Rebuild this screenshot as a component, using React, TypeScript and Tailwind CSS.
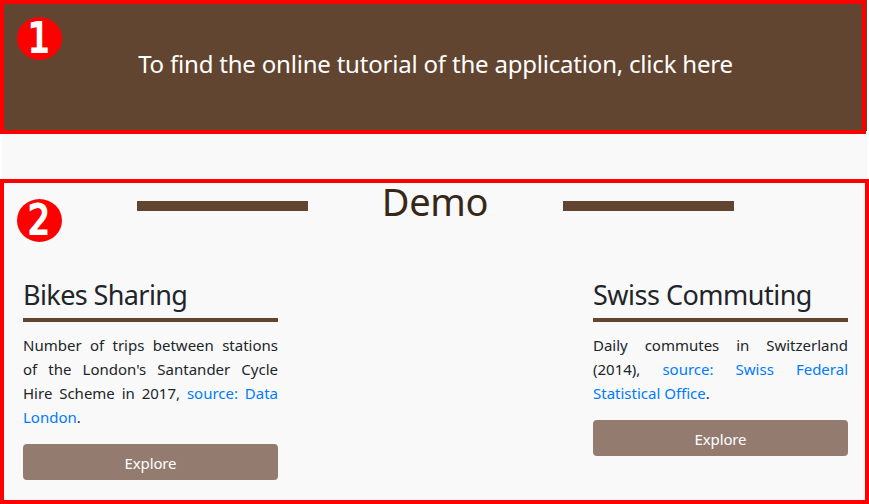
import type { ReactNode } from "react";

function Badge({ digit, className }: { digit: string; className: string }) {
  return (
    <div
      className={`absolute flex items-center justify-center rounded-[50%] bg-[#ff0000] text-white ${className}`}
    >
      <span className="inline-block scale-x-[0.84] font-['DejaVu_Sans',sans-serif] text-[41px] leading-none [-webkit-text-stroke:2.2px_white]">
        {digit}
      </span>
    </div>
  );
}

function DemoCard({ title, titleClass, children }: { title: string; titleClass: string; children: ReactNode }) {
  return (
    <article className="w-[255px]">
      <h3 className={`h-[42px] border-b-4 border-[#614530] text-[27px] leading-[29px] whitespace-nowrap ${titleClass}`}>
        {title}
      </h3>
      <div className="mt-[11px] text-justify text-[15px] leading-6">{children}</div>
      <button className="mt-[15px] block h-9 w-full rounded bg-[#937c6f] pt-px text-[15px] leading-9 tracking-[-0.15px] text-white">
        Explore
      </button>
    </article>
  );
}

export default function App() {
  return (
    <div className="relative h-[504px] w-[869px] overflow-hidden bg-white font-['Noto_Sans','Open_Sans',sans-serif] text-[#212529]">
      <div className="ml-0.5 h-full w-[865px] bg-[#f9f9f9]">
        <header className="flex h-[131px] items-center justify-center bg-[#614530] pb-[3px] pl-[2px]">
          <a className="text-[24px] tracking-[-0.2px] whitespace-nowrap text-white">
            To find the online tutorial of the application, click here
          </a>
        </header>
        <main className="pt-[46px]">
          <div className="flex h-[51px] items-center pl-[135px]">
            <span className="mt-[7px] h-[10px] w-[171px] bg-[#614530]" />
            <h2 className="-mt-[3px] w-[255px] pr-px text-center text-[38px] leading-[50px] tracking-[-0.3px] text-[#372719]">
              Demo
            </h2>
            <span className="mt-[7px] h-[10px] w-[171px] bg-[#614530]" />
          </div>
          <div className="flex justify-between pt-[52px] pr-[19px] pl-[21px]">
            <DemoCard title="Bikes Sharing" titleClass="tracking-[-0.6px]">
              Number of trips between stations of the London's Santander Cycle Hire Scheme in 2017,{" "}
              <a className="text-[#007bff]">source: Data London</a>.
            </DemoCard>
            <DemoCard title="Swiss Commuting" titleClass="tracking-[-0.5px]">
              Daily commutes in Switzerland (2014),{" "}
              <a className="text-[#007bff]">source: Swiss Federal Statistical Office</a>.
            </DemoCard>
          </div>
        </main>
      </div>
      <div className="absolute top-0 left-0 h-[134px] w-[866px] border-4 border-[#ff0000]" />
      <div className="absolute top-[179px] left-0 h-[325px] w-[869px] border-4 border-[#ff0000]" />
      <Badge digit="1" className="top-[17px] left-[17px] h-[43px] w-[45px]" />
      <Badge digit="2" className="top-[199px] left-[17px] h-[43px] w-[45px]" />
    </div>
  );
}
